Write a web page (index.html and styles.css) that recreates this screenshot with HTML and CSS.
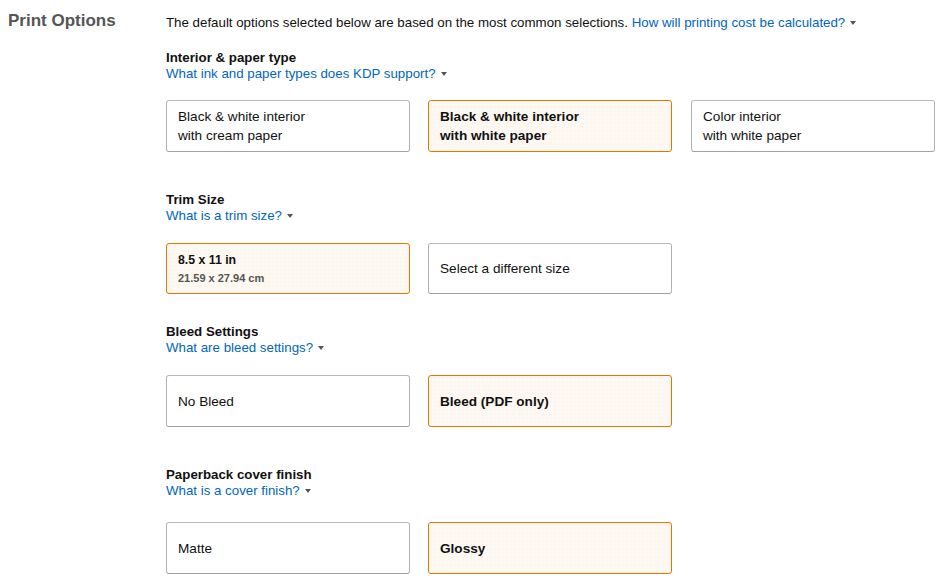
FILE: index.html
```html
<!DOCTYPE html>
<html lang="en">
<head>
<meta charset="utf-8">
<title>Print Options</title>
<link rel="stylesheet" href="styles.css">
</head>
<body>
<div class="page">
  <div class="label-col"><h2 class="label">Print Options</h2></div>
  <div class="content">
    <p class="intro">The default options selected below are based on the most common selections. <a class="link" href="#">How will printing cost be calculated?</a><span class="caret"></span></p>

    <section class="section s-interior">
      <h3 class="heading">Interior &amp; paper type</h3>
      <a class="link" href="#">What ink and paper types does KDP support?</a><span class="caret"></span>
      <div class="options">
        <div class="opt"><span>Black &amp; white interior<br>with cream paper</span></div>
        <div class="opt selected"><span>Black &amp; white interior<br>with white paper</span></div>
        <div class="opt third"><span>Color interior<br>with white paper</span></div>
      </div>
    </section>

    <section class="section s-trim">
      <h3 class="heading">Trim Size</h3>
      <a class="link" href="#">What is a trim size?</a><span class="caret"></span>
      <div class="options trim">
        <div class="opt selected"><span class="trim-main">8.5 x 11 in</span><span class="trim-sub">21.59 x 27.94 cm</span></div>
        <div class="opt"><span>Select a different size</span></div>
      </div>
    </section>

    <section class="section s-bleed">
      <h3 class="heading">Bleed Settings</h3>
      <a class="link" href="#">What are bleed settings?</a><span class="caret"></span>
      <div class="options">
        <div class="opt"><span>No Bleed</span></div>
        <div class="opt selected"><span>Bleed (PDF only)</span></div>
      </div>
    </section>

    <section class="section s-cover">
      <h3 class="heading">Paperback cover finish</h3>
      <a class="link" href="#">What is a cover finish?</a><span class="caret"></span>
      <div class="options">
        <div class="opt"><span>Matte</span></div>
        <div class="opt selected"><span>Glossy</span></div>
      </div>
    </section>
  </div>
</div>
</body>
</html>
```

FILE: styles.css
```css
* { box-sizing: border-box; }
html, body { margin: 0; padding: 0; background: #fff; }
body {
  font-family: "Liberation Sans", Arial, sans-serif;
  font-size: 13.3px;
  color: #111;
}
.page {
  display: flex;
  padding-top: 9px;
}
.label-col {
  width: 166px;
  flex: none;
  padding-left: 8px;
}
.label {
  margin: 0;
  font-size: 17px;
  line-height: 24px;
  font-weight: bold;
  color: #555;
}
.content {
  width: 770px;
}
.intro {
  margin: 4px 0 0;
  line-height: 19px;
}
.link {
  color: #0066c0;
  text-decoration: none;
}
.caret {
  display: inline-block;
  width: 0;
  height: 0;
  margin-left: 5px;
  vertical-align: 2px;
  border-left: 3.5px solid transparent;
  border-right: 3.5px solid transparent;
  border-top: 4px solid #555;
}
.section { line-height: 16px; }
.heading {
  margin: 0;
  font-size: 13.3px;
  line-height: 16px;
  font-weight: bold;
}
.s-interior { margin-top: 18px; }
.s-trim { margin-top: 40px; }
.s-bleed { margin-top: 30px; }
.s-cover { margin-top: 40px; }
.options {
  display: grid;
  grid-template-columns: 244px 244px 245px;
  column-gap: 18px;
  margin-top: 19px;
}
.opt.third { margin-left: 1px; }
.s-interior .options { margin-top: 18px; }
.s-cover .options { margin-top: 23px; }
.opt {
  height: 52px;
  border: 1px solid #adb1b8;
  border-color: #b4b8bf #adb1b8 #9da1a8;
  border-radius: 3px;
  background: #fff;
  padding: 0 11px;
  display: flex;
  flex-direction: column;
  justify-content: center;
  line-height: 19px;
  font-size: 13.6px;
  color: #111;
}
.trim .opt { height: 51px; }
.opt.selected {
  border: 1px solid #e77600;
  background-color: #fef8f2;
  background-image: radial-gradient(#f8f0e7 0.5px, transparent 0.8px);
  background-size: 4px 4px;
  font-weight: bold;
}
.trim-main {
  font-size: 12.3px;
  line-height: 18px;
}
.trim-sub {
  font-size: 11px;
  line-height: 18px;
  color: #555;
}
```
